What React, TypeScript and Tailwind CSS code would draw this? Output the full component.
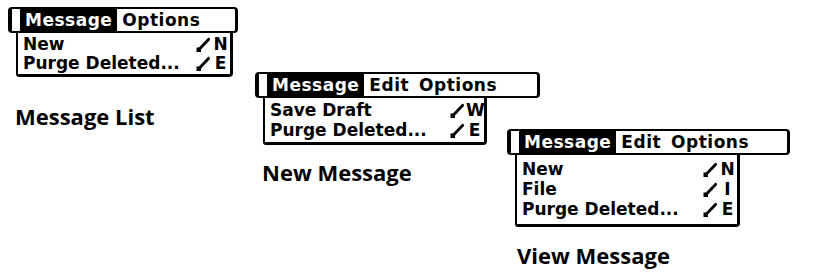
import React from "react";

function Stroke() {
  return (
    <svg width="14" height="15" viewBox="0 0 14 15" className="shrink-0">
      <path d="M4 11.5 L12.5 2.5" stroke="black" strokeWidth="3" strokeLinecap="square" fill="none" />
      <rect x="0.5" y="10.5" width="4.5" height="4.5" fill="black" />
    </svg>
  );
}

type Item = { label: string; key: string };

function Bar({ items, width }: { items: string[]; width: string }) {
  return (
    <div
      className={`flex h-[26px] items-stretch border-t-2 border-b-2 border-l-[4px] border-r-[3px] border-black rounded-[4px] bg-white tracking-[0.5px] ${width}`}
    >
      <div className="w-[8px] shrink-0" />
      {items.map((t, i) => (
        <div
          key={t}
          className={`px-[5px] leading-[22px] ${i === 0 ? "bg-black text-white" : "text-black"}`}
        >
          {t}
        </div>
      ))}
    </div>
  );
}

function Drop({ items, width, rowH, pad }: { items: Item[]; width: string; rowH: string; pad: string }) {
  return (
    <div
      className={`ml-[8px] flex flex-col border-l-2 border-r-[3px] border-b-[3px] border-black rounded-bl-[3px] rounded-br-[4px] bg-white tracking-normal ${pad} ${width}`}
    >
      {items.map((it) => (
        <div key={it.label} className={`flex items-center justify-between pl-[5px] pr-[1px] ${rowH}`}>
          <span>{it.label}</span>
          <span className="flex items-center gap-[2px]">
            <Stroke />
            <span className="w-[17px] text-center">{it.key}</span>
          </span>
        </div>
      ))}
    </div>
  );
}

export default function App() {
  const menu = "font-['DejaVu_Sans',sans-serif] font-bold text-[17px] text-black";
  const label = "font-['Open_Sans',sans-serif] font-bold text-[22px] leading-[28px] tracking-normal text-black";
  return (
    <div className="flex h-[276px] w-[832px] items-start overflow-hidden bg-white">
      <div className={`ml-[8px] mt-[7px] w-[247px] shrink-0 ${menu}`}>
        <Bar items={["Message", "Options"]} width="w-[230px]" />
        <Drop
          width="w-[217px]"
          rowH="h-[19px] leading-[19px]"
          pad="pt-[2px] pb-[1px]"
          items={[
            { label: "New", key: "N" },
            { label: "Purge Deleted...", key: "E" },
          ]}
        />
        <div className={`ml-[7px] mt-[25px] ${label}`}>Message List</div>
      </div>
      <div className={`mt-[72px] w-[252px] shrink-0 ${menu}`}>
        <Bar items={["Message", "Edit", "Options"]} width="w-[285px]" />
        <Drop
          width="w-[224px]"
          rowH="h-[20px] leading-[20px]"
          pad="pt-[2px] pb-[2px]"
          items={[
            { label: "Save Draft", key: "W" },
            { label: "Purge Deleted...", key: "E" },
          ]}
        />
        <div className={`ml-[7px] mt-[13px] ${label}`}>New Message</div>
      </div>
      <div className={`mt-[129px] w-[300px] shrink-0 ${menu}`}>
        <Bar items={["Message", "Edit", "Options"]} width="w-[283px]" />
        <Drop
          width="w-[225px]"
          rowH="h-[20px] leading-[20px]"
          pad="pt-[4px] pb-[5px]"
          items={[
            { label: "New", key: "N" },
            { label: "File", key: "I" },
            { label: "Purge Deleted...", key: "E" },
          ]}
        />
        <div className={`ml-[10px] mt-[14px] ${label}`}>View Message</div>
      </div>
    </div>
  );
}
